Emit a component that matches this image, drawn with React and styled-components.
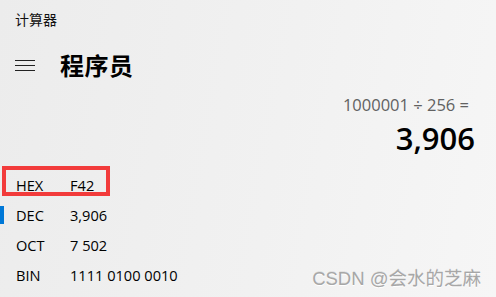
import React from 'react';
import styled, {createGlobalStyle} from 'styled-components';

const GlobalStyle = createGlobalStyle`
    html, body {
        margin: 0;
        padding: 0;
    }
    body {
        font-family: "Open Sans", "Noto Sans CJK SC", sans-serif;
        color: #000;
    }
`;

const Window = styled.div`
    position: relative;
    width: 496px;
    height: 297px;
    overflow: hidden;
    background: linear-gradient(100deg, #ececec 0%, #f1f1f1 55%, #f6f6f6 100%);
    display: flex;
    flex-direction: column;
`;

const TitleBar = styled.div`
    height: 32px;
    padding: 9px 0 0 15px;
    box-sizing: border-box;
    font-family: "Noto Sans CJK SC", sans-serif;
    font-size: 14px;
    line-height: 20px;
    color: #111;
`;

const Header = styled.div`
    display: flex;
    align-items: center;
    gap: 25px;
    height: 40px;
    margin-top: 13px;
    padding-left: 15px;
`;

const MenuButton = styled.div`
    display: flex;
    width: 20px;
    height: 11px;
`;

const ModeTitle = styled.h1`
    margin: 0;
    font-family: "Noto Sans CJK SC", sans-serif;
    font-size: 24px;
    font-weight: 700;
    line-height: 32px;
    letter-spacing: 0.5px;
`;

const Display = styled.div`
    display: flex;
    flex-direction: column;
    align-items: flex-end;
    padding-right: 21px;
    margin-top: 10px;
`;

const Expression = styled.div`
    margin-right: 6px;
    font-size: 16.5px;
    line-height: 20px;
    color: #616161;
`;

const Result = styled.div`
    font-size: 31px;
    font-weight: 600;
    line-height: 40px;
    margin-top: 3px;
`;

const RadixList = styled.div`
    display: flex;
    flex-direction: column;
    margin-top: 12px;
`;

const RadixRow = styled.div`
    position: relative;
    display: flex;
    align-items: center;
    height: 30px;
    padding-left: 16px;
    font-size: 14.6px;
    font-weight: 500;
    color: #000;

    &::before {
        content: '';
        display: ${p => (p.$active ? 'block' : 'none')};
        position: absolute;
        left: 0;
        top: 6px;
        width: 4px;
        height: 18px;
        background: #0078d7;
    }

    &::after {
        content: '';
        display: ${p => (p.$marked ? 'block' : 'none')};
        position: absolute;
        left: 2px;
        top: -4px;
        width: 108px;
        height: 30px;
        box-sizing: border-box;
        border: 4px solid #f23b3b;
    }
`;

const RadixName = styled.span`
    width: 54px;
    flex-shrink: 0;
`;

const RadixValue = styled.span`
    white-space: nowrap;
`;

const Watermark = styled.div`
    position: absolute;
    right: 15px;
    bottom: 7px;
    font-family: "Liberation Sans", "Noto Sans CJK SC", sans-serif;
    font-size: 18.5px;
    line-height: 22px;
    color: #a7a7a7;
    text-shadow: 0 1px 0 #ffffff, 0 -1px 0 rgba(0, 0, 0, 0.08);
`;

const rows = [
    {name: 'HEX', value: 'F42', marked: true},
    {name: 'DEC', value: '3,906', active: true},
    {name: 'OCT', value: '7 502'},
    {name: 'BIN', value: '1111 0100 0010'},
];

function App() {
    return (
        <Window>
            <GlobalStyle/>
            <TitleBar>计算器</TitleBar>
            <Header>
                <MenuButton>
                    <svg width="20" height="11" viewBox="0 0 20 11">
                        <path d="M0 0.5h20M0 5.5h20M0 10.5h20" stroke="#222" strokeWidth="1"/>
                    </svg>
                </MenuButton>
                <ModeTitle>程序员</ModeTitle>
            </Header>
            <Display>
                <Expression>1000001 ÷ 256 =</Expression>
                <Result>3,906</Result>
            </Display>
            <RadixList>
                {rows.map(r => (
                    <RadixRow key={r.name} $active={r.active} $marked={r.marked}>
                        <RadixName>{r.name}</RadixName>
                        <RadixValue>{r.value}</RadixValue>
                    </RadixRow>
                ))}
            </RadixList>
            <Watermark>CSDN @会水的芝麻</Watermark>
        </Window>
    );
}

export default App;
